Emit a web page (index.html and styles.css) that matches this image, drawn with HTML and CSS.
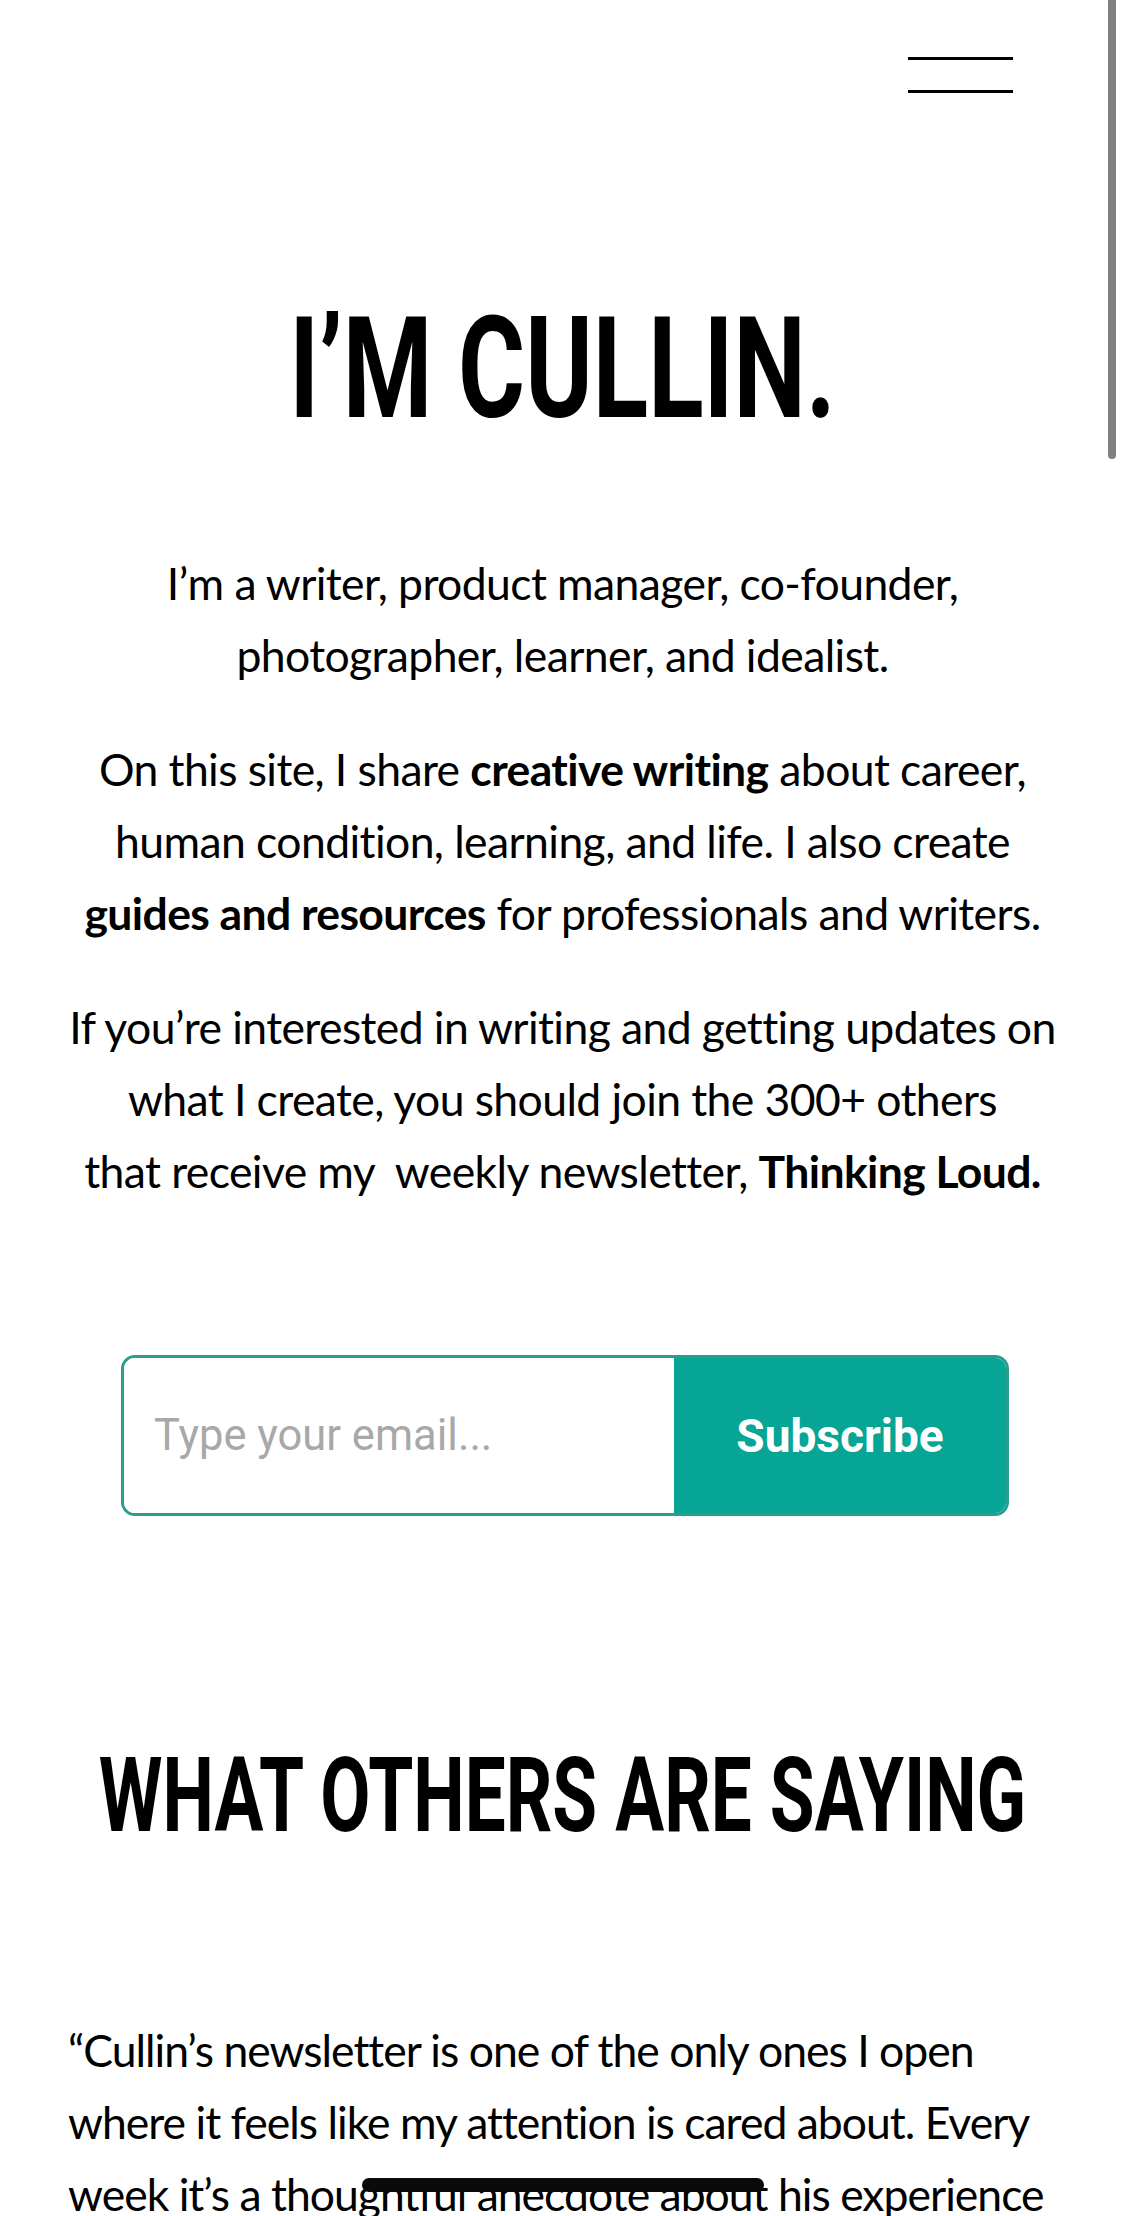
FILE: index.html
```html
<!DOCTYPE html>
<html lang="en">
<head>
<meta charset="utf-8">
<title>I'm Cullin.</title>
<link rel="stylesheet" href="styles.css">
</head>
<body>
<div class="page">
  <header class="site-header">
    <button class="menu-btn" aria-label="Menu"><span></span><span></span></button>
  </header>

  <h1 class="hero-title">I’M CULLIN.</h1>

  <section class="intro">
    <p>I’m a writer, product manager, co-founder,<br>photographer, learner, and idealist.</p>
    <p>On this site, I share <strong>creative writing</strong> about career,<br>human condition, learning, and life. I also create<br><strong>guides and resources</strong> for professionals and writers.</p>
    <p>If you’re interested in writing and getting updates on<br>what I create, you should join the 300+ others<br>that receive my&nbsp; weekly newsletter, <strong>Thinking Loud.</strong></p>
  </section>

  <form class="subscribe" onsubmit="return false;">
    <input type="email" placeholder="Type your email...">
    <button type="submit">Subscribe</button>
  </form>

  <h2 class="section-title">WHAT OTHERS ARE SAYING</h2>

  <blockquote class="quote">“Cullin’s newsletter is one of the only ones I open<br>where it feels like my attention is cared about. Every<br>week it’s a thoughtful anecdote about his experience</blockquote>

  <div class="scroll-indicator"></div>
  <div class="home-indicator"></div>
</div>
</body>
</html>
```

FILE: styles.css
```css
html, body {
  margin: 0;
  padding: 0;
  background: #ffffff;
}

body {
  color: #000000;
  font-family: Lato, "Noto Sans", sans-serif;
}

.page {
  position: relative;
  width: 1125px;
  height: 2216px;
  overflow: hidden;
}

.site-header {
  display: flex;
  justify-content: flex-end;
  padding: 57px 112px 0 0;
}

.menu-btn {
  display: flex;
  flex-direction: column;
  gap: 30px;
  width: 105px;
  padding: 0;
  margin: 0;
  border: 0;
  background: none;
}

.menu-btn span {
  display: block;
  height: 3px;
  background: #000000;
}

.hero-title {
  display: flex;
  justify-content: center;
  margin: 205px 0 0;
  font-family: Roboto, "Liberation Sans", sans-serif;
  font-weight: 700;
  font-size: 141px;
  line-height: 141px;
  white-space: nowrap;
  transform: scaleX(0.727);
}

.intro {
  margin: 108px 20px 0;
  text-align: center;
}

.intro p {
  margin: 0 0 42px;
  font-size: 44.5px;
  line-height: 72px;
  letter-spacing: -0.6px;
  white-space: nowrap;
}

.intro strong {
  font-weight: 700;
}

.subscribe {
  display: flex;
  box-sizing: border-box;
  width: 888px;
  height: 161px;
  margin: 148px 0 0 121px;
  border: 3px solid #2b9d8f;
  border-radius: 14px;
  overflow: hidden;
}

.subscribe input {
  flex: 1;
  min-width: 0;
  margin: 0;
  padding: 0 0 0 30px;
  border: 0;
  outline: none;
  background: #ffffff;
  font-family: Roboto, "Liberation Sans", sans-serif;
  font-size: 43.5px;
  color: #333333;
}

.subscribe input::placeholder {
  color: #a8a8a8;
}

.subscribe button {
  width: 332px;
  margin: 0;
  padding: 0;
  border: 0;
  background: #06a595;
  color: #ffffff;
  font-family: Roboto, "Liberation Sans", sans-serif;
  font-weight: 700;
  font-size: 46px;
}

.section-title {
  display: flex;
  justify-content: center;
  margin: 228px 0 0;
  font-family: Roboto, "Liberation Sans", sans-serif;
  font-weight: 700;
  font-size: 104px;
  line-height: 104px;
  white-space: nowrap;
  transform: scaleX(0.70);
}

.quote {
  margin: 166px 20px 0 68px;
  font-size: 44.5px;
  line-height: 72px;
  letter-spacing: -1px;
  white-space: nowrap;
}

.scroll-indicator {
  position: absolute;
  top: -8px;
  right: 9px;
  width: 8px;
  height: 467px;
  border-radius: 4px;
  background: #808080;
}

.home-indicator {
  position: absolute;
  left: 362px;
  bottom: 24px;
  width: 402px;
  height: 14px;
  border-radius: 7px;
  background: #0a0a0a;
}
```
